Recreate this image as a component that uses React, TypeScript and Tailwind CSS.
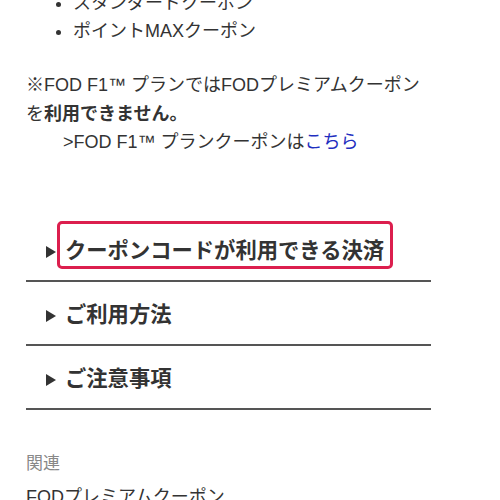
import React from "react";

const sections = ["クーポンコードが利用できる決済", "ご利用方法", "ご注意事項"];

export default function App() {
  return (
    <div
      className="w-[500px] h-[500px] overflow-hidden bg-white text-[#333] pl-[26px]"
      style={{ fontFamily: '"Liberation Sans", "Noto Sans CJK JP", sans-serif' }}
    >
      <ul className="list-disc pl-[47px] mt-[-11px] text-[18px] leading-[28px]">
        <li>スタンダードクーポン</li>
        <li>ポイントMAXクーポン</li>
      </ul>

      <div className="mt-[26px] text-[18px] leading-[28.5px]">
        <p>※FOD F1™ プランではFODプレミアムクーポン</p>
        <p>
          を<span className="font-bold">利用できません。</span>
        </p>
        <p className="pl-[37px]">
          &gt;FOD F1™ プランクーポンは<span className="text-[#1f2fc0]">こちら</span>
        </p>
      </div>

      <div className="mt-[61px] w-[405px]">
        {sections.map((title, i) => (
          <div key={title} className="h-[64px] pt-[6px] flex items-center border-b-2 border-[#555]">
            <svg className="ml-[20px] mr-[9px] shrink-0" width="10" height="12" viewBox="0 0 10 12">
              <path d="M0 0 L10 6 L0 12 Z" fill="#333" />
            </svg>
            <span className="relative text-[21.3px] font-bold leading-none">
              {title}
              {i === 0 && (
                <span className="absolute left-[-8px] right-[-9px] top-[-20px] bottom-[-7px] border-[3px] border-[#dc1f4e] rounded-[5px]" />
              )}
            </span>
          </div>
        ))}
      </div>

      <p className="mt-[41px] text-[17px] text-[#888] leading-[26px]">関連</p>
      <p className="mt-[6px] text-[18px] leading-[28px]">FODプレミアムクーポン</p>
    </div>
  );
}
